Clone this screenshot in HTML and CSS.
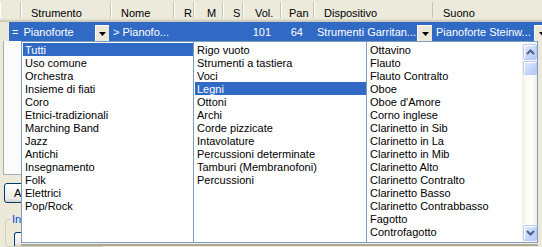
FILE: index.html
```html
<!DOCTYPE html>
<html lang="it">
<head>
  <meta charset="UTF-8">
  <title>Strumenti</title>
  <link rel="stylesheet" href="styles.css">
</head>
<body>
  <div class="head">
    <div class="hc w0"></div>
    <div class="hc w1">Strumento</div>
    <div class="hc w2">Nome</div>
    <div class="hc w3">R</div>
    <div class="hc w4">M</div>
    <div class="hc w5">S</div>
    <div class="hc w6">Vol.</div>
    <div class="hc w7">Pan</div>
    <div class="hc w8">Dispositivo</div>
    <div class="hc w9">Suono</div>
  </div>

  <div class="row">
    <div class="cell instr"><span class="eq">=</span>Pianoforte</div>
    <div class="drop"><svg width="7" height="4" viewBox="0 0 7 4"><polygon points="0,0 7,0 3.5,4" fill="#000"/></svg></div>
    <div class="cell name">&gt; Pianofo...</div>
    <div class="cell r"></div>
    <div class="cell m"></div>
    <div class="cell s"></div>
    <div class="cell vol">101</div>
    <div class="cell pan">64</div>
    <div class="cell dev">Strumenti Garritan...</div>
    <div class="drop"><svg width="7" height="4" viewBox="0 0 7 4"><polygon points="0,0 7,0 3.5,4" fill="#000"/></svg></div>
    <div class="cell snd">Pianoforte Steinw...</div>
    <div class="drop"><svg width="7" height="4" viewBox="0 0 7 4"><polygon points="0,0 7,0 3.5,4" fill="#000"/></svg></div>
  </div>

  <!-- window content behind the dropdown -->
  <div class="behind">
    <div class="panel"></div>
    <div class="btn">A</div>
    <fieldset class="group">
      <legend>In</legend>
      <div class="btn small"></div>
    </fieldset>
  </div>

  <div class="popup">
    <ul class="list first">
      <li class="item sel">Tutti</li>
      <li class="item">Uso comune</li>
      <li class="item">Orchestra</li>
      <li class="item">Insieme di fiati</li>
      <li class="item">Coro</li>
      <li class="item">Etnici-tradizionali</li>
      <li class="item">Marching Band</li>
      <li class="item">Jazz</li>
      <li class="item">Antichi</li>
      <li class="item">Insegnamento</li>
      <li class="item">Folk</li>
      <li class="item">Elettrici</li>
      <li class="item">Pop/Rock</li>
    </ul>
    <ul class="list mid">
      <li class="item">Rigo vuoto</li>
      <li class="item">Strumenti a tastiera</li>
      <li class="item">Voci</li>
      <li class="item sel">Legni</li>
      <li class="item">Ottoni</li>
      <li class="item">Archi</li>
      <li class="item">Corde pizzicate</li>
      <li class="item">Intavolature</li>
      <li class="item">Percussioni determinate</li>
      <li class="item">Tamburi (Membranofoni)</li>
      <li class="item">Percussioni</li>
    </ul>
    <div class="list last">
      <ul class="items">
        <li class="item">Ottavino</li>
        <li class="item">Flauto</li>
        <li class="item">Flauto Contralto</li>
        <li class="item">Oboe</li>
        <li class="item">Oboe d'Amore</li>
        <li class="item">Corno inglese</li>
        <li class="item">Clarinetto in Sib</li>
        <li class="item">Clarinetto in La</li>
        <li class="item">Clarinetto in Mib</li>
        <li class="item">Clarinetto Alto</li>
        <li class="item">Clarinetto Contralto</li>
        <li class="item">Clarinetto Basso</li>
        <li class="item">Clarinetto Contrabbasso</li>
        <li class="item">Fagotto</li>
        <li class="item">Controfagotto</li>
      </ul>
      <div class="scroll">
        <div class="sbtn"><svg width="9" height="6" viewBox="0 0 9 6"><path d="M1 5 L4.5 1.5 L8 5" fill="none" stroke="#4d6185" stroke-width="2"/></svg></div>
        <div class="thumb"></div>
        <div class="sbtn down"><svg width="9" height="6" viewBox="0 0 9 6"><path d="M1 1 L4.5 4.5 L8 1" fill="none" stroke="#4d6185" stroke-width="2"/></svg></div>
      </div>
    </div>
  </div>
</body>
</html>
```

FILE: styles.css
```css
* {
  box-sizing: border-box;
}

body {
  margin: 0;
  width: 542px;
  height: 247px;
  overflow: hidden;
  position: relative;
  background: #ece9d8;
  font-family: 'Liberation Sans', Arial, sans-serif;
  font-size: 11px;
  color: #000;
}

/* column header */
.head {
  display: flex;
  height: 22px;
  background: linear-gradient(#ebeadb 0, #ebeadb 19px, #e2decd 19px, #e2decd 20px, #d6d2c2 20px, #d6d2c2 21px, #cbc7b8 21px);
}

.hc {
  flex: none;
  height: 19px;
  padding: 3px 0 0 10px;
  line-height: 20px;
  white-space: nowrap;
  background:
    linear-gradient(#c7c5b2, #c7c5b2) no-repeat right 0 top 2px / 1px 16px,
    linear-gradient(#fff, #fff) no-repeat left 0 top 2px / 1px 16px;
}

.w0 { width: 21px; }
.w1 { width: 90px; }
.w2 { width: 63px; }
.w3 { width: 20px; }
.w4 { width: 29px; padding-left: 13px; }
.w5 { width: 20px; }
.w6 { width: 38px; padding-left: 12px; }
.w7 { width: 33px; padding-left: 8px; }
.w8 { width: 119px; }
.w9 { flex: 1; background: none; }

/* selected track row */
.row {
  display: flex;
  margin-left: 9px;
  height: 19px;
  background: #316ac5;
  color: #fff;
}

.cell {
  flex: none;
  height: 19px;
  padding-top: 1px;
  line-height: 19px;
  white-space: nowrap;
  overflow: hidden;
}

.instr { width: 86px; padding-left: 3px; }
.eq { margin-right: 5px; }
.name { width: 64px; padding-left: 4px; }
.r { width: 20px; }
.m { width: 29px; }
.s { width: 20px; }
.vol { width: 38px; text-align: right; padding-right: 9px; }
.pan { width: 33px; text-align: right; padding-right: 10px; }
.dev { width: 104px; padding-left: 4px; }
.snd { width: 102px; padding-left: 4px; }

.drop {
  flex: none;
  width: 14px;
  height: 16px;
  margin-top: 3px;
  background: #ece9d8;
  border-top: 1px solid #fff;
  border-left: 1px solid #fff;
  display: flex;
  align-items: center;
  justify-content: center;
}

.dev + .drop,
.snd + .drop {
  width: 15px;
}

.drop svg {
  display: block;
}

/* things behind the popup */
.behind {
  padding-left: 3px;
}

.panel {
  width: 60px;
  height: 134px;
  background: #fbfbf9;
  border-left: 1px solid #a5acb5;
  border-bottom: 1px solid #a5acb5;
}

.btn {
  width: 80px;
  height: 20px;
  margin: 8px 0 0 1px;
  padding-left: 9px;
  line-height: 19px;
  border: 1px solid #003c74;
  border-radius: 3px;
  background: linear-gradient(#fff, #ecebe6 80%, #d6d0c5);
}

.group {
  width: 100px;
  height: 34px;
  margin: 10px 0 0 2px;
  padding: 2px 8px 0;
  border: 1px solid #d0d0bf;
  border-radius: 4px;
  overflow: hidden;
}

.group legend {
  padding: 0 1px;
  margin-left: -3px;
  line-height: 13px;
  color: #0046d5;
}

.btn.small {
  height: 14px;
  margin: 4px 0 0 0;
  border-bottom: none;
  border-radius: 3px 3px 0 0;
}

/* instrument chooser dropdown */
.popup {
  position: absolute;
  left: 21px;
  top: 41px;
  width: 517px;
  height: 202px;
  display: flex;
  background: #fff;
  border: 1px solid #7f9db9;
  box-shadow: 0 1px 0 #f4f3ee, 0 3px 0 #aca899;
}

ul {
  margin: 0;
  padding: 0;
  list-style: none;
}

.list {
  flex: none;
  height: 100%;
  padding: 1px 0 0 1px;
  overflow: hidden;
}

.first { width: 171px; }
.mid { width: 173px; border-left: 1px solid #7f9db9; }
.last {
  width: 171px;
  border-left: 1px solid #7f9db9;
  display: flex;
}

.items {
  flex: 1;
  overflow: hidden;
}

.item {
  height: 13px;
  line-height: 15px;
  padding-left: 2px;
  white-space: nowrap;
}

.item.sel {
  background: #316ac5;
  color: #fff;
}

.scroll {
  flex: none;
  width: 15px;
  display: flex;
  flex-direction: column;
  background: linear-gradient(to right, #f1efe6, #fdfdfa 35%, #fdfdfa 70%, #eeece3);
}

.sbtn,
.thumb {
  width: 14px;
  margin: 1px 0 0 1px;
  border: 1px solid #b7cbf6;
  border-radius: 2px;
  background: linear-gradient(135deg, #e3ecfe, #c3d5fc 60%, #b4c9f7);
  box-shadow: inset 1px 1px 0 #fff;
}

.sbtn {
  height: 16px;
  display: flex;
  align-items: center;
  justify-content: center;
}

.thumb {
  height: 14px;
}

.sbtn.down {
  margin-top: auto;
  margin-bottom: 1px;
}
```
